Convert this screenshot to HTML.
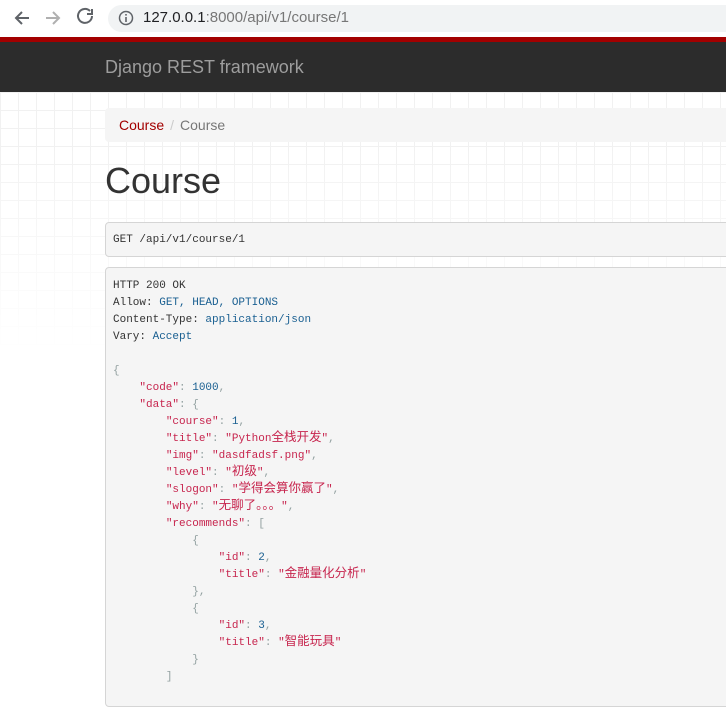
<!DOCTYPE html>
<html><head><meta charset="utf-8"><style>
*{margin:0;padding:0;box-sizing:border-box}
body{width:726px;height:688px;overflow:hidden;background:#fff;font-family:"Liberation Sans","Noto Sans CJK SC",sans-serif;position:relative}
.bar{position:absolute;left:0;top:0;width:726px;height:37px;background:#fff}
.addr{position:absolute;left:108px;top:5px;width:640px;height:27px;background:#f1f3f4;border-radius:14px}
.url{position:absolute;left:143px;top:9px;font-size:15px;color:#202124}
.url span{color:#777}
.red{position:absolute;left:0;top:37px;width:726px;height:5px;background:#a30000}
.nav{position:absolute;left:0;top:42px;width:726px;height:50px;background:#2c2c2c}
.brand{position:absolute;left:105px;top:57px;font-size:18px;color:#9d9d9d}
.grid{position:absolute;left:0;top:92px;width:726px;height:260px;
background-image:linear-gradient(#f1f1f1 1px,transparent 1px),linear-gradient(90deg,#f1f1f1 1px,transparent 1px);
background-size:18px 18px;-webkit-mask-image:linear-gradient(180deg,#000 20%,transparent 100%);mask-image:linear-gradient(180deg,#000 20%,transparent 100%)}
.bc{position:absolute;left:105px;top:108px;width:640px;height:34px;background:#f5f5f5;border-radius:4px;font-size:14px;padding:9px 14px;color:#777}
.bc a{color:#a30000}
.bc .sep{color:#ccc;padding:0 6px}
h1{position:absolute;left:105px;top:160px;font-size:36px;font-weight:400;color:#333}
pre{font-family:"Liberation Mono","Noto Sans CJK SC",monospace;font-size:11px;line-height:17px;color:#333}
.get{position:absolute;left:105px;top:222px;width:640px;height:35px;background:#f5f5f5;border:1px solid #d5d5d5;border-radius:4px;padding:9px 7px}
.resp{position:absolute;left:105px;top:267px;width:640px;height:440px;background:#f5f5f5;border:1px solid #d5d5d5;border-radius:4px;padding:10px 7px}
.s{color:#c7254e}
.c{font-size:12.5px;font-family:"Noto Sans CJK SC",sans-serif;line-height:0}
.p{color:#93a1a1}
.l{color:#195f91}
</style></head><body>
<div class="bar">
<svg width="100" height="37" style="position:absolute;left:0;top:0" fill="none" stroke-width="2">
<path d="M29 18H16M22 12l-6 6 6 6" stroke="#5f6368"/>
<path d="M46 18h13M53 12l6 6-6 6" stroke="#b0b0b0"/>
<path d="M92 16a7 7 0 1 1-2-5" stroke="#5f6368"/><path d="M92 9v5h-5" stroke="#5f6368"/>
</svg>
<div class="addr"></div>
<svg width="16" height="16" style="position:absolute;left:118px;top:10px"><circle cx="8" cy="8" r="6.5" fill="none" stroke="#5f6368" stroke-width="1.5"/><rect x="7.2" y="7" width="1.6" height="5" fill="#5f6368"/><rect x="7.2" y="4" width="1.6" height="1.6" fill="#5f6368"/></svg>
<div class="url">127.0.0.1<span>:8000/api/v1/course/1</span></div>
</div>
<div class="red"></div>
<div class="nav"></div>
<div class="brand">Django REST framework</div>
<div class="grid"></div>
<div class="bc"><a>Course</a><span class="sep">/</span>Course</div>
<h1>Course</h1>
<div class="get"><pre>GET /api/v1/course/1</pre></div>
<div class="resp"><pre>HTTP 200 OK
Allow: <span class="l">GET, HEAD, OPTIONS</span>
Content-Type: <span class="l">application/json</span>
Vary: <span class="l">Accept</span>

<span class="p">{</span>
    <span class="s">"code"</span><span class="p">:</span> <span class="l">1000</span><span class="p">,</span>
    <span class="s">"data"</span><span class="p">: {</span>
        <span class="s">"course"</span><span class="p">:</span> <span class="l">1</span><span class="p">,</span>
        <span class="s">"title"</span><span class="p">:</span> <span class="s">"Python<span class="c">全栈开发</span>"</span><span class="p">,</span>
        <span class="s">"img"</span><span class="p">:</span> <span class="s">"dasdfadsf.png"</span><span class="p">,</span>
        <span class="s">"level"</span><span class="p">:</span> <span class="s">"<span class="c">初级</span>"</span><span class="p">,</span>
        <span class="s">"slogon"</span><span class="p">:</span> <span class="s">"<span class="c">学得会算你赢了</span>"</span><span class="p">,</span>
        <span class="s">"why"</span><span class="p">:</span> <span class="s">"<span class="c">无聊了。。。</span>"</span><span class="p">,</span>
        <span class="s">"recommends"</span><span class="p">: [</span>
            <span class="p">{</span>
                <span class="s">"id"</span><span class="p">:</span> <span class="l">2</span><span class="p">,</span>
                <span class="s">"title"</span><span class="p">:</span> <span class="s">"<span class="c">金融量化分析</span>"</span>
            <span class="p">},</span>
            <span class="p">{</span>
                <span class="s">"id"</span><span class="p">:</span> <span class="l">3</span><span class="p">,</span>
                <span class="s">"title"</span><span class="p">:</span> <span class="s">"<span class="c">智能玩具</span>"</span>
            <span class="p">}</span>
        <span class="p">]</span>
</pre></div>
</body></html>
